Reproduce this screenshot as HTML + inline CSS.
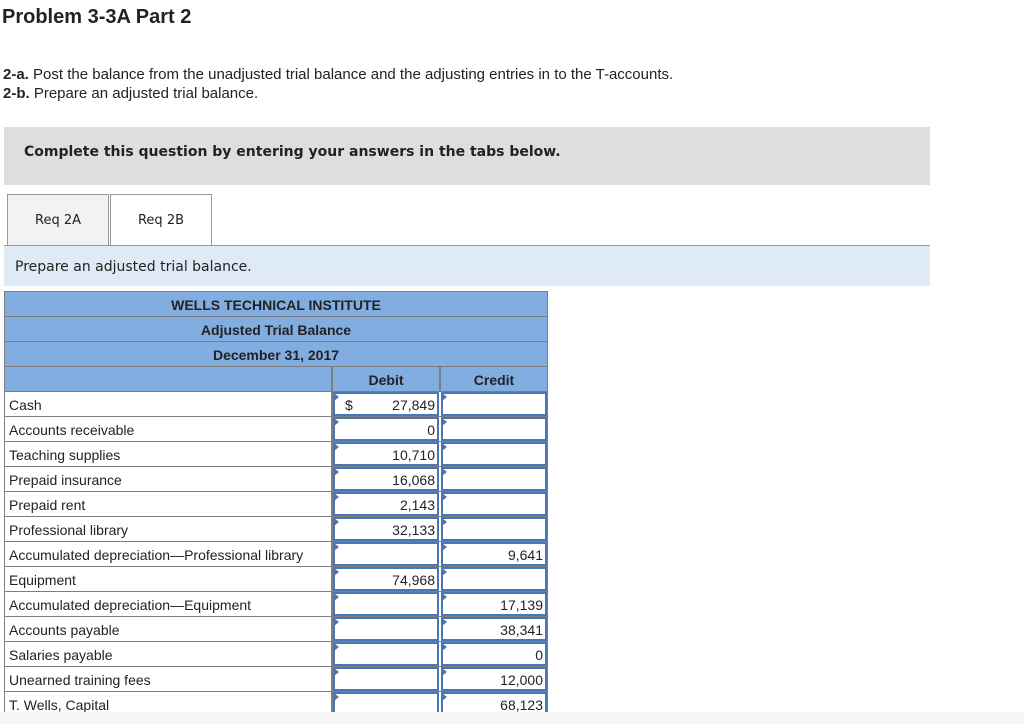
<!DOCTYPE html>
<html><head><meta charset="utf-8"><style>
body{margin:0;width:1024px;height:724px;background:#fff;position:relative;overflow:hidden;font-family:"Liberation Sans",Arial,sans-serif;color:#222}
.a{position:absolute}
h1{position:absolute;left:2px;top:6px;margin:0;font-size:20px;font-weight:bold;color:#222}
.q{position:absolute;left:3px;font-size:15px}
.grey{left:4px;top:127px;width:926px;height:58px;background:#dedede}
.tab{top:194px;height:50px;border:1px solid #999;border-bottom:none;font-family:"DejaVu Sans",sans-serif;font-size:13px;text-align:center;line-height:52px}
.bar{left:4px;top:245px;width:926px;height:40px;background:#deebf7;border-top:1px solid #999;font-family:"DejaVu Sans",sans-serif;font-size:14px;line-height:42px;text-indent:11px}
.hd{left:4px;width:542px;height:24px;background:#82ade0;border:1px solid #7e7e7e;border-top:none;font-weight:bold;font-size:14px;text-align:center;line-height:26px}
.row{left:4px;width:542px;height:24px;border:1px solid #7e7e7e;border-top:none;font-size:14px;line-height:26px}
.lab{position:absolute;left:4px;top:0}
.box{position:absolute;top:0;height:20px;border:2px solid #4a76b5;background:#fff;text-align:right;line-height:22px;padding-right:2px;box-sizing:content-box}
.tri{position:absolute;left:-1px;top:-1px;width:0;height:0;border-top:4px solid transparent;border-bottom:4px solid transparent;border-left:5px solid #4a76b5}
.sep{position:absolute;top:0;width:2px;height:24px;background:#7e7e7e}
</style></head><body>
<h1>Problem 3-3A Part 2</h1>
<div class="q" style="top:66px"><b>2-a.</b> Post the balance from the unadjusted trial balance and the adjusting entries in to the T-accounts.</div>
<div class="q" style="top:85px"><b>2-b.</b> Prepare an adjusted trial balance.</div>
<div class="a grey"><div class="a" style="left:20px;top:17px;font-family:'DejaVu Sans',sans-serif;font-weight:bold;font-size:14px">Complete this question by entering your answers in the tabs below.</div></div>
<div class="a tab" style="left:7px;width:100px;background:#f2f2f2">Req 2A</div>
<div class="a tab" style="left:110px;width:100px;background:#fff;height:51px">Req 2B</div>
<div class="a bar">Prepare an adjusted trial balance.</div>
<div class="a" style="left:4px;top:291px;width:544px;height:1px;background:#7e7e7e"></div>
<div class="a hd" style="top:292px">WELLS TECHNICAL INSTITUTE</div>
<div class="a hd" style="top:317px">Adjusted Trial Balance</div>
<div class="a hd" style="top:342px">December 31, 2017</div>
<div class="a hd" style="top:367px;text-align:left"><span class="a" style="left:326px;top:0;width:2px;height:24px;background:#7e7e7e"></span><span class="a" style="left:328px;width:106px;text-align:center">Debit</span><span class="a" style="left:434px;top:0;width:2px;height:24px;background:#7e7e7e"></span><span class="a" style="left:436px;width:106px;text-align:center">Credit</span></div>
<div id="rows"></div>
<div class="a" style="left:0;top:712px;width:1024px;height:12px;background:#f5f5f5"></div>
<script>
var d=[["Cash","27,849","",1],["Accounts receivable","0",""],["Teaching supplies","10,710",""],["Prepaid insurance","16,068",""],["Prepaid rent","2,143",""],["Professional library","32,133",""],["Accumulated depreciation\u2014Professional library","","9,641"],["Equipment","74,968",""],["Accumulated depreciation\u2014Equipment","","17,139"],["Accounts payable","","38,341"],["Salaries payable","","0"],["Unearned training fees","","12,000"],["T. Wells, Capital","","68,123"]];
var h="";
d.forEach(function(r,i){var t=392+25*i;
h+='<div class="a row" style="top:'+t+'px"><span class="lab">'+r[0]+'</span>'+
'<span class="sep" style="left:326px"></span>'+
'<div class="box" style="left:328px;width:100px"><span class="tri"></span>'+(r[3]?'<span style="position:absolute;left:10px">$</span>':'')+r[1]+'</div>'+
'<div class="box" style="left:436px;width:100px"><span class="tri"></span>'+r[2]+'</div></div>';});
document.getElementById("rows").innerHTML=h;
</script>
</body></html>
